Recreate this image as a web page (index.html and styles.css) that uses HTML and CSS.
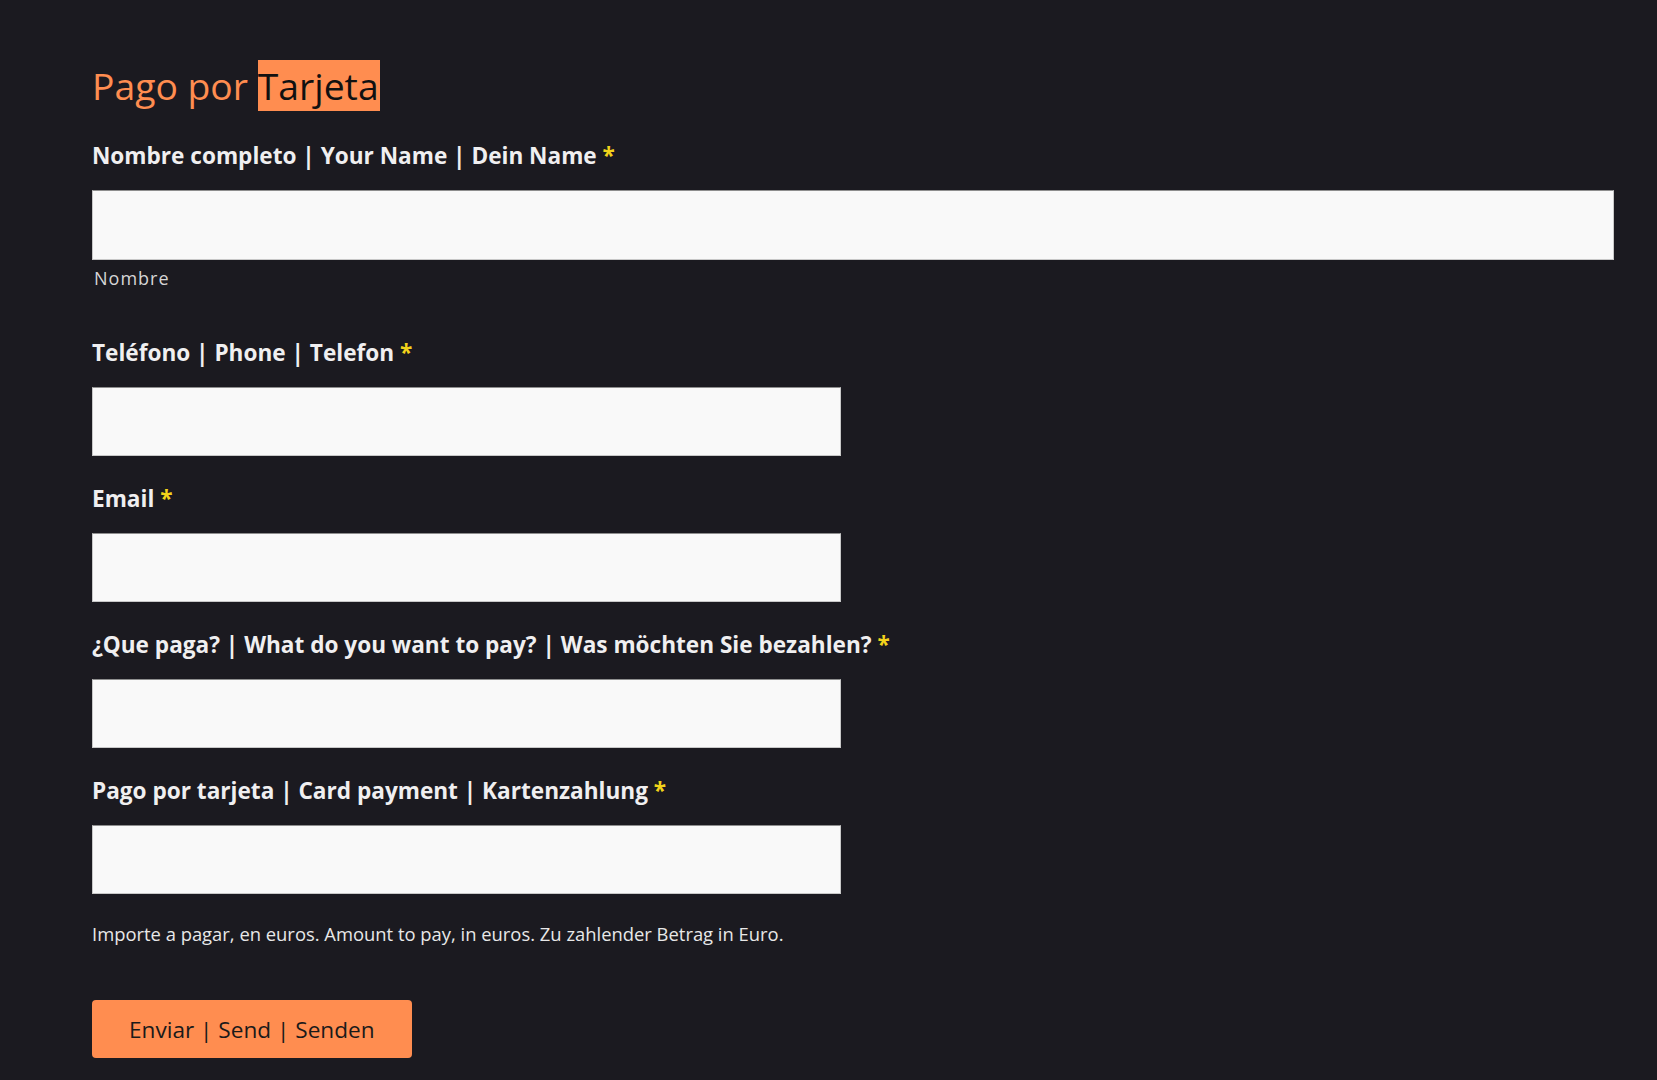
FILE: index.html
```html
<!DOCTYPE html>
<html lang="es">
<head>
    <meta charset="UTF-8">
    <meta name="viewport" content="width=device-width, initial-scale=1.0">
    <title>Pago por Tarjeta</title>
    <link rel="stylesheet" href="styles.css">
</head>
<body>
    <div class="container">
        <h2 class="title">Pago por <span class="mark">Tarjeta</span></h2>

        <form class="pay-form">
            <div class="field">
                <label for="nombre">Nombre completo | Your Name | Dein Name <span class="req">*</span></label>
                <input type="text" id="nombre" class="full">
                <span class="sublabel">Nombre</span>
            </div>

            <div class="field">
                <label for="telefono">Teléfono | Phone | Telefon <span class="req">*</span></label>
                <input type="tel" id="telefono">
            </div>

            <div class="field">
                <label for="email">Email <span class="req">*</span></label>
                <input type="email" id="email">
            </div>

            <div class="field">
                <label for="concepto">¿Que paga? | What do you want to pay? | Was möchten Sie bezahlen? <span class="req">*</span></label>
                <input type="text" id="concepto">
            </div>

            <div class="field">
                <label for="importe">Pago por tarjeta | Card payment | Kartenzahlung <span class="req">*</span></label>
                <input type="text" id="importe">
                <p class="help">Importe a pagar, en euros. Amount to pay, in euros. Zu zahlender Betrag in Euro.</p>
            </div>

            <button type="submit">Enviar | Send | Senden</button>
        </form>
    </div>
</body>
</html>
```

FILE: styles.css
```css
* {
    margin: 0;
    padding: 0;
    box-sizing: border-box;
    font-family: 'Open Sans', sans-serif;
}

body {
    background: #1b1a20;
    color: #f2f2f2;
    min-height: 100vh;
}

.container {
    padding: 60px 43px 0 92px;
}

.title {
    font-size: 37.3px;
    font-weight: 400;
    line-height: 52px;
    color: #ff8d50;
    margin-bottom: 29px;
}

.title .mark {
    background: #ff8d50;
    color: #111;
    padding-right: 1px;
}

.field {
    margin-bottom: 28px;
}

label {
    display: block;
    font-size: 22.6px;
    font-weight: 700;
    line-height: 30px;
    color: #f0eff0;
    margin-bottom: 19px;
}

.req {
    color: #f2d31b;
}

input {
    display: block;
    width: 749px;
    height: 69px;
    background: #f9f9f9;
    border: 1px solid #c8c8c8;
    border-top-color: #8e8e8e;
    font-size: 18px;
    padding: 0 14px;
    color: #222;
}

input.full {
    width: 100%;
    height: 70px;
}

input:focus {
    outline: none;
}

.sublabel {
    display: block;
    font-size: 18px;
    line-height: 24px;
    letter-spacing: 1px;
    color: #d6d6d6;
    margin: 6px 0 48px 2px;
}

.help {
    font-size: 18.4px;
    line-height: 24px;
    color: #e8e8e8;
    margin-top: 28px;
}

.field:last-of-type {
    margin-bottom: 54px;
}

button {
    background: #ff8d50;
    color: #1a1a1a;
    height: 58px;
    padding: 0 37px;
    border: none;
    border-radius: 4px;
    font-size: 22.6px;
    cursor: pointer;
}
```
